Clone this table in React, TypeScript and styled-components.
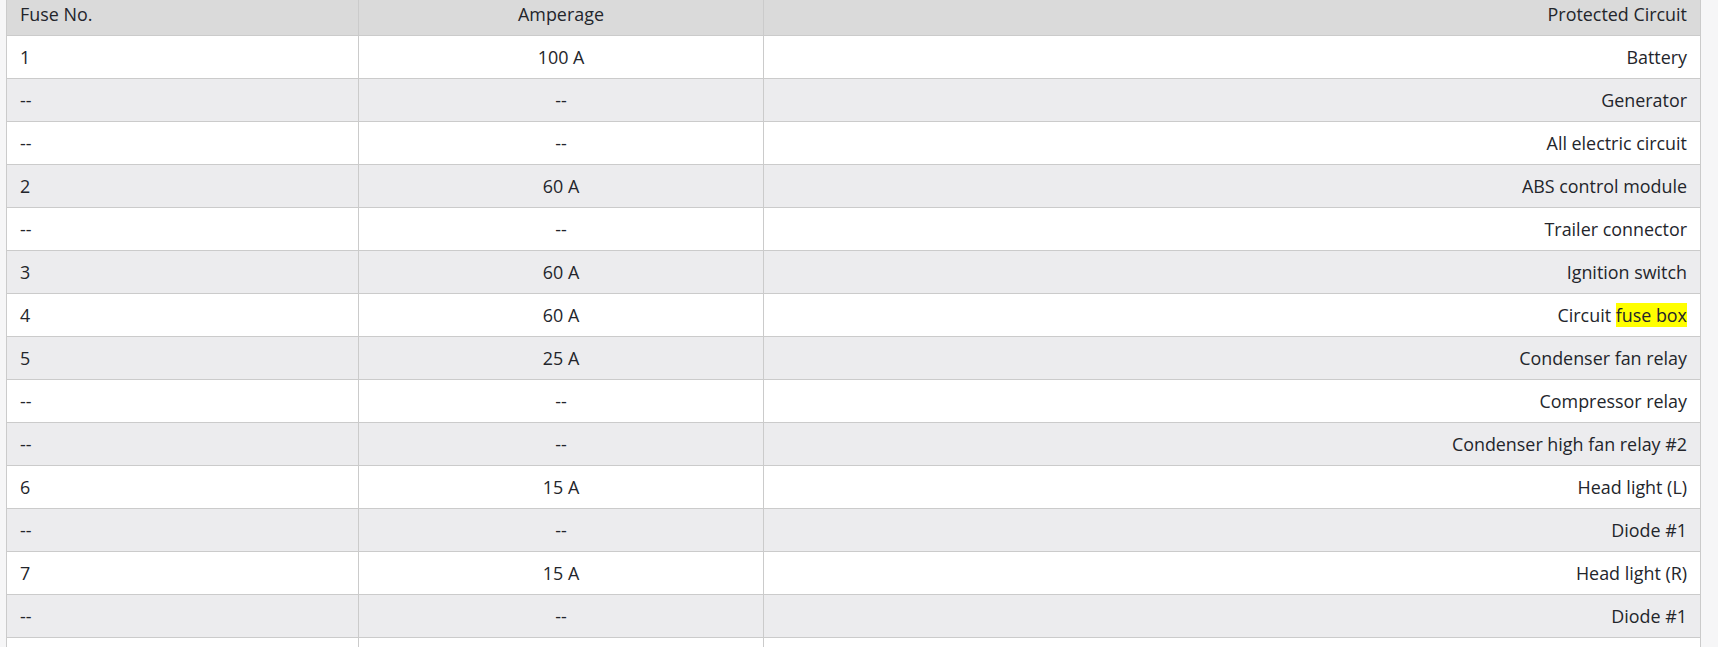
import React from "react";
import styled, { createGlobalStyle } from "styled-components";

const GlobalStyle = createGlobalStyle`
  html, body {
    margin: 0;
    padding: 0;
    background: #f6f6f7;
    overflow: hidden;
  }
`;

const Page = styled.div`
  padding-left: 6px;
  margin-top: -7px;
  width: 1695px;
`;

const FuseTable = styled.table`
  width: 100%;
  border-collapse: collapse;
  table-layout: fixed;
  font-family: "Open Sans", "Noto Sans", sans-serif;
  font-size: 17.9px;
  color: #23252b;
  background: #fff;
`;

const HeadCell = styled.th<{ align: "left" | "center" | "right" }>`
  height: 42px;
  padding: 0 13px;
  background: #dadada;
  font-weight: 400;
  text-align: ${(p) => p.align};
  border: 1px solid #cbcbcb;
  border-top: none;
`;

const Row = styled.tr`
  &:nth-child(even) {
    background: #ececee;
  }
`;

const Cell = styled.td<{ align: "left" | "center" | "right" }>`
  height: 42px;
  padding: 0 13px;
  text-align: ${(p) => p.align};
  vertical-align: middle;
  border: 1px solid #cbcbcb;
`;

const Mark = styled.span`
  background: #ffff00;
`;

const rows: [string, string, React.ReactNode][] = [
  ["1", "100 A", "Battery"],
  ["--", "--", "Generator"],
  ["--", "--", "All electric circuit"],
  ["2", "60 A", "ABS control module"],
  ["--", "--", "Trailer connector"],
  ["3", "60 A", "Ignition switch"],
  [
    "4",
    "60 A",
    <>
      Circuit <Mark>fuse box</Mark>
    </>,
  ],
  ["5", "25 A", "Condenser fan relay"],
  ["--", "--", "Compressor relay"],
  ["--", "--", "Condenser high fan relay #2"],
  ["6", "15 A", "Head light (L)"],
  ["--", "--", "Diode #1"],
  ["7", "15 A", "Head light (R)"],
  ["--", "--", "Diode #1"],
  // next row only shows its top edge in the frame
  ["", "", ""],
];

export default function App() {
  return (
    <>
      <GlobalStyle />
      <Page>
        <FuseTable>
          <colgroup>
            <col style={{ width: 352 }} />
            <col style={{ width: 405 }} />
            <col />
          </colgroup>
          <thead>
            <tr>
              <HeadCell align="left">Fuse No.</HeadCell>
              <HeadCell align="center">Amperage</HeadCell>
              <HeadCell align="right">Protected Circuit</HeadCell>
            </tr>
          </thead>
          <tbody>
            {rows.map((r, i) => (
              <Row key={i}>
                <Cell align="left">{r[0]}</Cell>
                <Cell align="center">{r[1]}</Cell>
                <Cell align="right">{r[2]}</Cell>
              </Row>
            ))}
          </tbody>
        </FuseTable>
      </Page>
    </>
  );
}
